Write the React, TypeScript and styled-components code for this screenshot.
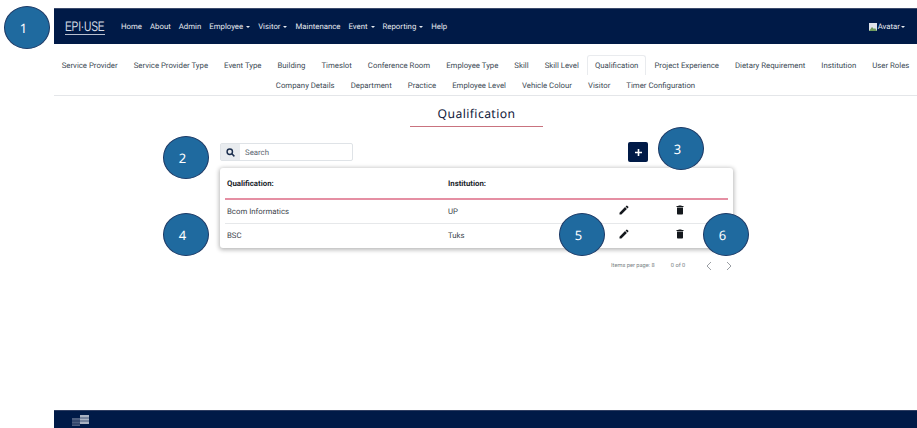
import React from "react";
import styled, { createGlobalStyle } from "styled-components";

const Global = createGlobalStyle`
  html, body { margin: 0; padding: 0; background: #fff; }
  body { font-family: Roboto, "Liberation Sans", sans-serif; text-rendering: geometricPrecision; }
  * { box-sizing: border-box; }
`;

const Page = styled.div`
  position: relative;
  width: 917px;
  height: 428px;
  overflow: hidden;
  padding: 8px 0 0 54px;
  display: flex;
  flex-direction: column;
`;
const TopBar = styled.header`
  height: 36px;
  background: #001a47;
  border-top: 1px solid #3c4a6c;
  display: flex;
  align-items: center;
  padding: 0 12px 0 11px;
  color: #e6e9ef;
  font-size: 7.8px;
  flex: none;
`;
const Logo = styled.div`
  width: 40px;
  height: 16px;
  margin-right: 16px;
  color: #d5dae4;
  border-bottom: 1.5px solid #b9c0cf;
  overflow: visible;
`;
const LogoText = styled.span`
  display: block;
  font-family: "Liberation Sans", sans-serif;
  font-size: 14px;
  line-height: 14px;
  white-space: nowrap;
  letter-spacing: -0.3px;
  transform: scaleX(0.73);
  transform-origin: left center;
`;
const NavList = styled.nav`
  display: flex;
  gap: 8px;
  flex: 1;
`;
const NavItem = styled.span`
  display: inline-flex;
  align-items: center;
  white-space: nowrap;
  gap: 3px;
`;
const Caret = styled.i`
  width: 0;
  height: 0;
  border-left: 2.5px solid transparent;
  border-right: 2.5px solid transparent;
  border-top: 2.5px solid currentColor;
`;
const AvatarMenu = styled.div`
  display: flex;
  align-items: center;
  gap: 1px;
`;
const Tabs = styled.div`
  height: 52px;
  border-bottom: 1px solid #e4e6e9;
  padding-top: 11px;
  flex: none;
  display: flex;
  flex-direction: column;
  align-items: center;
`;
const TabRow = styled.div`
  display: flex;
  justify-content: center;
  height: 20px;
`;
const Tab = styled.span<{ $active?: boolean }>`
  padding: 0 7px;
  display: flex;
  align-items: center;
  font-size: 7.8px;
  white-space: nowrap;
  color: #3d4a55;
  border: 1px solid ${(p) => (p.$active ? "#e9ebee" : "transparent")};
  border-bottom: none;
  border-radius: 3px 3px 0 0;
`;
const TitleBlock = styled.div`
  align-self: center;
  width: 133px;
  margin: 9px 18px 0 0;
  height: 22px;
  border-bottom: 1px solid #c9737f;
  text-align: center;
  font-family: "Noto Sans", sans-serif;
  font-size: 12.2px;
  line-height: 18px;
  letter-spacing: 0.4px;
  color: #12203a;
`;
const Content = styled.main`
  width: 513px;
  margin: 15px 0 0 166px;
  flex: none;
`;
const Toolbar = styled.div`
  display: flex;
  align-items: center;
  justify-content: space-between;
  height: 20px;
  padding-right: 85px;
`;
const SearchGroup = styled.div`
  display: flex;
  width: 133px;
  height: 18px;
  border: 1px solid #dfe3e7;
  border-radius: 2px;
`;
const SearchAddon = styled.span`
  width: 19px;
  background: #e9ecef;
  display: flex;
  align-items: center;
  justify-content: center;
  color: #1c2f4e;
  flex: none;
`;
const SearchText = styled.span`
  padding-left: 5px;
  display: flex;
  align-items: center;
  font-size: 7.8px;
  color: #5a6570;
`;
const AddButton = styled.button`
  width: 20px;
  height: 20px;
  padding: 0;
  border: 0;
  border-radius: 2px;
  background: #001a47;
  color: #fff;
  display: flex;
  align-items: center;
  justify-content: center;
`;
const Card = styled.section`
  margin-top: 6px;
  height: 80px;
  border-radius: 3px;
  background: #fff;
  box-shadow: 0 1px 4px 1px rgba(0, 0, 0, 0.28);
  padding: 0 5px;
`;
const Row = styled.div<{ $head?: boolean; $last?: boolean }>`
  display: grid;
  grid-template-columns: 221px 170px 56px 1fr;
  align-items: center;
  height: ${(p) => (p.$head ? "32px" : "24px")};
  padding: 0 0 ${(p) => (p.$head ? "0" : "1px")} 2px;
  font-size: 7.8px;
  color: ${(p) => (p.$head ? "#20262c" : "#3d454d")};
  font-weight: ${(p) => (p.$head ? 700 : 400)};
  border-bottom: ${(p) =>
    p.$head ? "2px solid #e58fa3" : p.$last ? "none" : "1px solid #e6e8ea"};
`;
const IconCell = styled.span`
  display: flex;
  color: #14181d;
  margin-top: -3px;
`;
const Pager = styled.div`
  display: flex;
  align-items: center;
  height: 12px;
  margin-top: 12px;
  padding-left: 391px;
  font-size: 5.7px;
  color: #7a7f85;
  white-space: nowrap;
`;
const PagerRange = styled.span`
  margin-left: 16px;
  width: 36px;
`;
const PagerArrows = styled.span`
  display: flex;
  gap: 12px;
  color: #9a9ea3;
`;
const Footer = styled.footer`
  margin-top: auto;
  height: 18px;
  background: #001a47;
  border-top: 1px solid #2f3e62;
  padding-left: 18px;
  display: flex;
  align-items: flex-end;
  padding-bottom: 2px;
  flex: none;
`;
const Badge = styled.div<{ $x: number; $y: number }>`
  position: absolute;
  left: ${(p) => p.$x}px;
  top: ${(p) => p.$y}px;
  width: 46px;
  height: 43px;
  padding-right: 7px;
  border-radius: 50%;
  background: #1f6a9f;
  border: 1.5px solid #1d3a66;
  color: #fff;
  font-family: "Noto Sans", "Open Sans", sans-serif;
  font-size: 13px;
  display: flex;
  align-items: center;
  justify-content: center;
`;

const Pencil = () => (
  <svg width="12" height="12" viewBox="0 0 24 24" fill="currentColor">
    <path d="M3 17.25V21h3.75L17.81 9.94l-3.75-3.75L3 17.25zM20.71 7.04a1 1 0 0 0 0-1.41l-2.34-2.34a1 1 0 0 0-1.41 0l-1.83 1.83 3.75 3.75 1.83-1.83z" />
  </svg>
);
const Trash = () => (
  <svg width="12" height="12" viewBox="0 0 24 24" fill="currentColor">
    <path d="M6 19c0 1.1.9 2 2 2h8c1.100 0 2-.9 2-2V7H6v12zM19 4h-3.500l-1-1h-5l-1 1H5v2h14V4z" />
  </svg>
);
const Chevron = ({ left }: { left?: boolean }) => (
  <svg width="8" height="10" viewBox="0 0 8 10" fill="none" stroke="currentColor" strokeWidth="1">
    <path d={left ? "M6 1 2 5l4 4" : "M2 1l4 4-4 4"} />
  </svg>
);

const row1 = ["Service Provider","Service Provider Type","Event Type","Building","Timeslot","Conference Room","Employee Type","Skill","Skill Level","Qualification","Project Experience","Dietary Requirement","Institution","User Roles"];
const row2 = ["Company Details","Department","Practice","Employee Level","Vehicle Colour","Visitor","Timer Configuration"];
const nav: [string, boolean][] = [["Home",false],["About",false],["Admin",false],["Employee",true],["Visitor",true],["Maintenance",false],["Event",true],["Reporting",true],["Help",false]];
const badges: [string, number, number][] = [["1",4,6],["2",163,136],["3",658,127],["4",163,213],["5",559,213],["6",703,213]];
const data = [["Bcom Informatics","UP"],["BSC","Tuks"]];

export default function App() {
  return (
    <Page>
      <Global />
      <TopBar>
        <Logo><LogoText>EPI·USE</LogoText></Logo>
        <NavList>
          {nav.map(([n, c]) => (
            <NavItem key={n}>{n}{c && <Caret />}</NavItem>
          ))}
        </NavList>
        <AvatarMenu>
          <svg width="8" height="8" viewBox="0 0 8 8">
            <rect width="8" height="8" fill="#dfe3ea" />
            <path d="M0 8l3-4 2 2 1-1 2 3z" fill="#6f9a5c" />
          </svg>
          Avatar
          <Caret />
        </AvatarMenu>
      </TopBar>
      <Tabs>
        <TabRow>{row1.map((t) => <Tab key={t} $active={t === "Qualification"}>{t}</Tab>)}</TabRow>
        <TabRow>{row2.map((t) => <Tab key={t}>{t}</Tab>)}</TabRow>
      </Tabs>
      <TitleBlock>Qualification</TitleBlock>
      <Content>
        <Toolbar>
          <SearchGroup>
            <SearchAddon>
              <svg width="9" height="9" viewBox="0 0 10 10" fill="none" stroke="currentColor" strokeWidth="1.6">
                <circle cx="4.200" cy="4.200" r="3" />
                <path d="M6.500 6.500 9.300 9.300" />
              </svg>
            </SearchAddon>
            <SearchText>Search</SearchText>
          </SearchGroup>
          <AddButton aria-label="Add">
            <svg width="9" height="9" viewBox="0 0 9 9" stroke="currentColor" strokeWidth="1.6">
              <path d="M4.500 1v7M1 4.500h7" />
            </svg>
          </AddButton>
        </Toolbar>
        <Card>
          <Row $head>
            <span>Qualification:</span>
            <span>Institution:</span>
          </Row>
          {data.map(([a, b], i) => (
            <Row key={a} $last={i === data.length - 1}>
              <span>{a}</span>
              <span>{b}</span>
              <IconCell><Pencil /></IconCell>
              <IconCell><Trash /></IconCell>
            </Row>
          ))}
        </Card>
        <Pager>
          Items per page: 8
          <PagerRange>0 of 0</PagerRange>
          <PagerArrows><Chevron left /><Chevron /></PagerArrows>
        </Pager>
      </Content>
      <Footer>
        <svg width="18" height="11" viewBox="0 0 18 11">
          <rect x="0" y="3" width="8" height="8" fill="#4c5d7e" />
          <rect x="8" y="0" width="9" height="9" fill="#a9b2c2" />
          <path d="M8 3h9M8 6h9M0 6h8M0 9h8" stroke="#001a47" strokeWidth="0.6" />
        </svg>
      </Footer>
      {badges.map(([l, x, y]) => <Badge key={l} $x={x} $y={y}>{l}</Badge>)}
    </Page>
  );
}
